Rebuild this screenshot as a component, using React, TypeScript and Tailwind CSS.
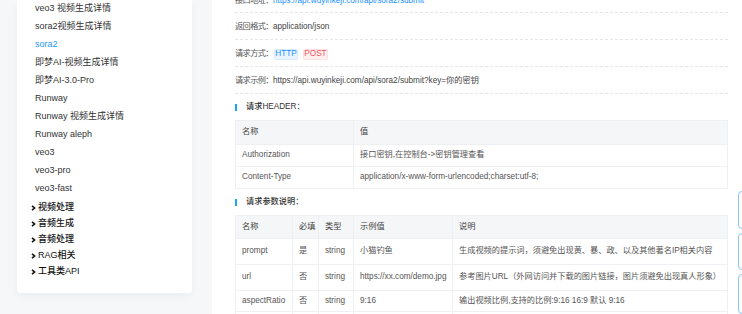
import React from 'react';

const font = { fontFamily: '"Liberation Sans", "Noto Sans CJK SC", sans-serif' };

const navItems = [
  'veo3 视频生成详情',
  'sora2视频生成详情',
  'sora2',
  '即梦AI-视频生成详情',
  '即梦AI-3.0-Pro',
  'Runway',
  'Runway 视频生成详情',
  'Runway aleph',
  'veo3',
  'veo3-pro',
  'veo3-fast',
];

const navGroups = ['视频处理', '音频生成', '音频处理', 'RAG相关', '工具类API'];

const headerRows = [
  { name: 'Authorization', value: '接口密钥,在控制台->密钥管理查看' },
  { name: 'Content-Type', value: 'application/x-www-form-urlencoded;charset:utf-8;' },
];

const paramRows = [
  { name: 'prompt', required: '是', type: 'string', example: '小猫钓鱼', desc: '生成视频的提示词，须避免出现黄、暴、政、以及其他著名IP相关内容', h: 'h-[26px]' },
  { name: 'url', required: '否', type: 'string', example: 'https://xx.com/demo.jpg', desc: '参考图片URL（外网访问并下载的图片链接，图片须避免出现真人形象）', h: 'h-[26px]' },
  { name: 'aspectRatio', required: '否', type: 'string', example: '9:16', desc: '输出视频比例,支持的比例:9:16 16:9 默认 9:16', h: 'h-[21px]' },
  { name: '', required: '', type: '', example: '', desc: '', h: 'h-[26px]' },
];

const Chevron = () => (
  <svg width="5" height="6" viewBox="0 0 5 6" className="mr-[2px]">
    <path d="M1 0.8 L3.6 3 L1 5.2" fill="none" stroke="#111" strokeWidth="1.6" />
  </svg>
);

const SectionTitle: React.FC<{ title: string }> = ({ title }) => (
  <div className="flex h-[26px] items-center">
    <span className="mr-[9px] h-[7px] w-[2px] bg-[#1aa3f0]" />
    <span className="text-[8.2px] font-medium text-[#333]">{title}</span>
  </div>
);

const Label: React.FC<{ text: string }> = ({ text }) => (
  <span className="tracking-[-0.6px]">{text}</span>
);

const App: React.FC = () => {
  return (
    <div className="relative flex h-[314px] w-[742px] overflow-hidden bg-[#f6f7f9]" style={font}>
      {/* sidebar */}
      <aside className="ml-[17px] h-[293px] w-[175px] shrink-0 rounded-b-[4px] bg-white shadow-[0_4px_10px_rgba(0,0,0,0.04)]">
        <ul className="pl-[18px] text-[9px] text-[#333]">
          {navItems.map((item) => (
            <li
              key={item}
              className={`flex h-[18px] items-center ${item === 'sora2' ? 'text-[#2597f0]' : ''}`}
            >
              {item}
            </li>
          ))}
        </ul>
        <ul className="mt-[2px] pl-[14px] text-[9px] font-medium text-[#111]">
          {navGroups.map((g) => (
            <li key={g} className="flex h-[16px] items-center">
              <Chevron />
              {g}
            </li>
          ))}
        </ul>
      </aside>

      {/* main */}
      <main className="ml-[20px] flex-1 bg-white pl-[23px] pr-[14px] text-[8.2px] text-[#555]">
        <div className="-mt-[14px]">
          <div className="flex h-[27px] items-center border-b border-dashed border-[#e6e6e6] pt-[5px]">
            <Label text="接口地址：" />
            <span className="text-[#1890ff]">https://api.wuyinkeji.com/api/sora2/submit</span>
          </div>
          <div className="flex h-[27px] items-center border-b border-dashed border-[#e6e6e6] pt-[2px]">
            <Label text="返回格式：" />
            <span className="text-[#444]">application/json</span>
          </div>
          <div className="flex h-[27px] items-center border-b border-dashed border-[#e6e6e6] pt-[2px]">
            <Label text="请求方式：" />
            <span className="ml-[1px] flex h-[11px] w-[24px] items-center justify-center rounded-[2px] border border-[#d6ebff] bg-[#eaf5ff] text-[#1890ff]">
              HTTP
            </span>
            <span className="ml-[5px] flex h-[11px] w-[25px] items-center justify-center rounded-[2px] border border-[#ffe0e0] bg-[#fff0f0] text-[#f5515f]">
              POST
            </span>
          </div>
          <div className="flex h-[27px] items-center border-b border-dashed border-[#e6e6e6] pt-[2px]">
            <Label text="请求示例：" />
            <span className="text-[#444]">https://api.wuyinkeji.com/api/sora2/submit?key=你的密钥</span>
          </div>
        </div>

        <SectionTitle title="请求HEADER：" />
        <div className="border border-[#eef0f3]">
          <div className="flex h-[23px] items-center bg-[#f5f6f8] text-[#444]">
            <div className="flex h-full w-[118px] items-center border-r border-[#eef0f3] pl-[6px]">名称</div>
            <div className="pl-[6px]">值</div>
          </div>
          {headerRows.map((r) => (
            <div key={r.name} className="flex h-[22px] items-center border-t border-[#eef0f3]">
              <div className="flex h-full w-[118px] items-center border-r border-[#eef0f3] pl-[6px]">{r.name}</div>
              <div className="pl-[6px]">{r.value}</div>
            </div>
          ))}
        </div>

        <SectionTitle title="请求参数说明：" />
        <div className="border border-[#eef0f3]">
          <div className="flex h-[22px] items-center bg-[#f5f6f8] text-[#444]">
            <div className="flex h-full w-[57px] items-center border-r border-[#eef0f3] pl-[6px]">名称</div>
            <div className="flex h-full w-[26px] items-center border-r border-[#eef0f3] pl-[6px]">必填</div>
            <div className="flex h-full w-[35px] items-center border-r border-[#eef0f3] pl-[6px]">类型</div>
            <div className="flex h-full w-[99px] items-center border-r border-[#eef0f3] pl-[6px]">示例值</div>
            <div className="pl-[6px]">说明</div>
          </div>
          {paramRows.map((r, i) => (
            <div key={i} className={`flex ${r.h} items-center border-t border-[#eef0f3]`}>
              <div className="flex h-full w-[57px] items-center border-r border-[#eef0f3] pl-[6px]">{r.name}</div>
              <div className="flex h-full w-[26px] items-center border-r border-[#eef0f3] pl-[6px]">{r.required}</div>
              <div className="flex h-full w-[35px] items-center border-r border-[#eef0f3] pl-[6px]">{r.type}</div>
              <div className="flex h-full w-[99px] items-center border-r border-[#eef0f3] pl-[6px]">{r.example}</div>
              <div className="whitespace-nowrap pl-[6px]">{r.desc}</div>
            </div>
          ))}
        </div>
      </main>

      {/* floating side buttons, mostly off screen */}
      <div className="absolute left-[738px] top-[191px] flex flex-col gap-[4px]">
        <div className="h-[38px] w-[30px] rounded-[4px] border border-[#8cc4f5] bg-white" />
        <div className="h-[37px] w-[30px] rounded-[4px] border border-[#8cc4f5] bg-white" />
        <div className="h-[40px] w-[30px] rounded-[4px] border border-[#8cc4f5] bg-white" />
      </div>
    </div>
  );
};

export default App;
